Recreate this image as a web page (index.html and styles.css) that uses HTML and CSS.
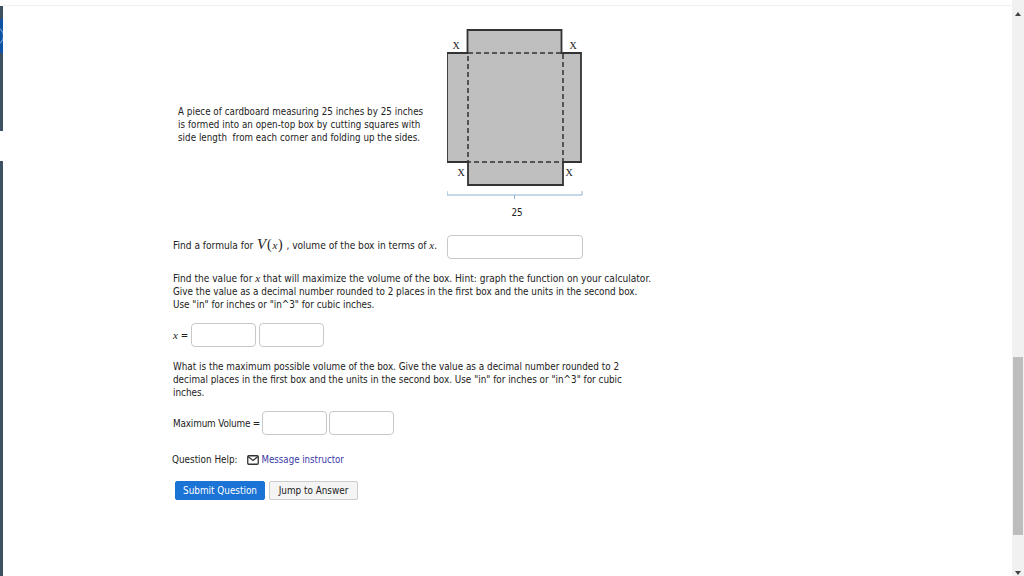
FILE: index.html
```html
<!DOCTYPE html>
<html lang="en">
<head>
<meta charset="utf-8">
<title>Question</title>
<link rel="stylesheet" href="styles.css">
</head>
<body>
<div class="page">
  <aside class="rail">
    <div class="rail-top"><div class="rail-blue"></div></div>
    <div class="rail-bottom"></div>
  </aside>
  <main class="content">
    <section class="figure-row">
      <p class="figure-text">A piece of cardboard measuring 25 inches by 25 inches<br>is formed into an open-top box by cutting squares with<br>side length &nbsp;from each corner and folding up the sides.</p>
      <svg class="diagram" width="140" height="211" viewBox="0 0 140 211" aria-label="Box net diagram">
        <path class="net" d="M20.500 29V6H114.500V29H134V138H116V161H21V138H0V29Z"/>
        <path class="dash" d="M21 29H116V138H21Z"/>
        <text class="x-label" x="9" y="25">X</text>
        <text class="x-label" x="126" y="25">X</text>
        <text class="x-label" x="14" y="152">X</text>
        <text class="x-label" x="122" y="152">X</text>
        <path class="brace" d="M0 167V171H135V167M67.500 171V175"/>
        <text class="size-label" x="70" y="192">25</text>
      </svg>
    </section>

    <div class="formula-row">
      <span class="formula-text">Find a formula for <var class="math-big">V</var><span class="math-paren">(</span><var class="math">x</var><span class="math-paren">)</span> , volume of the box in terms of <var class="math">x</var>.</span>
      <input class="field field-wide" type="text">
    </div>

    <p class="para para-first"><span class="line-wide">Find the value for <var class="math">x</var> that will maximize the volume of the box. Hint: graph the function on your calculator.</span><br>Give the value as a decimal number rounded to 2 places in the first box and the units in the second box.<br>Use "in" for inches or "in^3" for cubic inches.</p>

    <div class="answer-row answer-x">
      <label class="x-eq"><var class="math">x</var> =</label>
      <input class="field" type="text">
      <input class="field" type="text">
    </div>

    <p class="para para-second">What is the maximum possible volume of the box. Give the value as a decimal number rounded to 2<br>decimal places in the first box and the units in the second box. Use "in" for inches or "in^3" for cubic<br>inches.</p>

    <div class="answer-row answer-volume">
      <label class="volume-eq">Maximum Volume =</label>
      <input class="field" type="text">
      <input class="field" type="text">
    </div>

    <div class="help-row">
      <span>Question Help:</span>
      <svg class="mail" width="12" height="10" viewBox="0 0 12 10"><rect x="0.750" y="0.750" width="10.500" height="8.500" rx="1"/><path d="M1 1.500 6 5.500 11 1.500"/></svg>
      <a class="help-link" href="#">Message instructor</a>
    </div>

    <div class="button-row">
      <button class="btn btn-primary" type="button">Submit Question</button>
      <button class="btn btn-plain" type="button">Jump to Answer</button>
    </div>
  </main>
  <div class="scrollbar">
    <div class="arrow-up"></div>
    <div class="track"><div class="thumb"></div></div>
    <div class="arrow-down"></div>
  </div>
</div>
</body>
</html>
```
FILE: styles.css
```css
* { box-sizing: border-box; }
html, body { margin: 0; height: 100%; overflow: hidden; background: #fff; }
body { font-family: "DejaVu Sans Condensed", "DejaVu Sans", sans-serif; font-stretch: condensed; font-size: 9.850px; line-height: 13px; color: #222; }
.page { display: flex; height: 576px; }
.rail { width: 3px; flex: none; display: flex; flex-direction: column; padding-top: 6px; gap: 30px; }
.rail-top { height: 125px; background: #3d5163; padding-top: 13px; }
.rail-blue { position: relative; height: 34px; background: #0d52a5; overflow: hidden; }
.rail-blue::after { content: ""; position: absolute; left: -16px; top: 7px; width: 18px; height: 18px; border: 1px solid #8fb0d6; border-radius: 50%; }
.rail-bottom { flex: 1; background: #3d5163; }
.content { flex: 1; min-width: 0; padding: 24px 0 0 169px; position: relative; }
.content::before { content: ""; position: absolute; left: 0; right: 0; top: 5px; height: 1px; background: #f0f0f0; }
.figure-row { display: flex; align-items: flex-start; padding-left: 6px; height: 211px; }
.figure-text { margin: 81px 0 0; width: 269px; white-space: nowrap; font-size: 9.700px; letter-spacing: 0.050px; }
.diagram { display: block; flex: none; }
.net { fill: #bfbfbf; stroke: #333; stroke-width: 1.800px; }
.dash { fill: none; stroke: #333; stroke-width: 1.500px; stroke-dasharray: 5 3; }
.x-label { font-family: "Liberation Serif", serif; font-size: 10px; fill: #222; text-anchor: middle; }
.size-label { font-size: 9.800px; fill: #222; text-anchor: middle; }
.brace { fill: none; stroke: #8eb0d0; stroke-width: 1px; }
.formula-row { display: flex; align-items: flex-start; justify-content: space-between; width: 410px; margin-left: 1px; height: 24px; font-size: 10.100px; }
.formula-text { padding-top: 3px; }
.math { font-family: "Liberation Serif", serif; font-style: italic; font-size: 11px; }
.math-big { font-family: "Liberation Serif", serif; font-style: italic; font-size: 15px; margin-left: 1px; }
.math-paren { font-family: "Liberation Serif", serif; font-size: 14px; margin: 0 0.750px; }
.field { width: 65px; height: 24px; border: 1px solid #c8c8c8; border-radius: 4px; background: #fff; padding: 0; margin: 0; display: block; }
.field-wide { width: 136px; }
.para { margin: 0 0 0 1px; white-space: nowrap; }
.para-first { padding-top: 13px; }
.para-second { padding-top: 13px; }
.line-wide { font-size: 10.100px; }
.answer-row { display: flex; align-items: center; gap: 2px; margin-left: 1px; height: 24px; }
.answer-x { margin-top: 12px; gap: 3px; }
.x-eq { width: 15px; white-space: nowrap; }
.answer-volume { margin-top: 12px; }
.volume-eq { width: 87px; white-space: nowrap; letter-spacing: -0.150px; }
.help-row { display: flex; align-items: center; margin: 18px 0 0; height: 13px; }
.mail { margin: 0 3px 0 9px; fill: none; stroke: #333; stroke-width: 1.300px; }
.help-link { color: #3a3aa8; text-decoration: none; font-size: 9.600px; }
.button-row { display: flex; gap: 4px; margin: 15px 0 0 3px; }
.btn { height: 19px; padding: 0; border-radius: 2px; font: inherit; line-height: 17px; }
.btn-primary { width: 90px; background: #1a73d5; border: 1px solid #1a73d5; color: #fff; }
.btn-plain { width: 89px; background: #f4f4f4; border: 1px solid #ccc; color: #222; }
.scrollbar { width: 12px; flex: none; background: #f1f1f1; display: flex; flex-direction: column; align-items: center; }
.arrow-up { width: 0; height: 0; margin: 12px 0 0; border: 3px solid transparent; border-top: 0; border-bottom: 4px solid #444; }
.track { flex: 1; width: 100%; padding: 341px 1px 0; }
.thumb { height: 178px; background: #bdbdbd; }
.arrow-down { width: 0; height: 0; margin-bottom: 1px; border: 3px solid transparent; border-bottom: 0; border-top: 4px solid #444; }
```
